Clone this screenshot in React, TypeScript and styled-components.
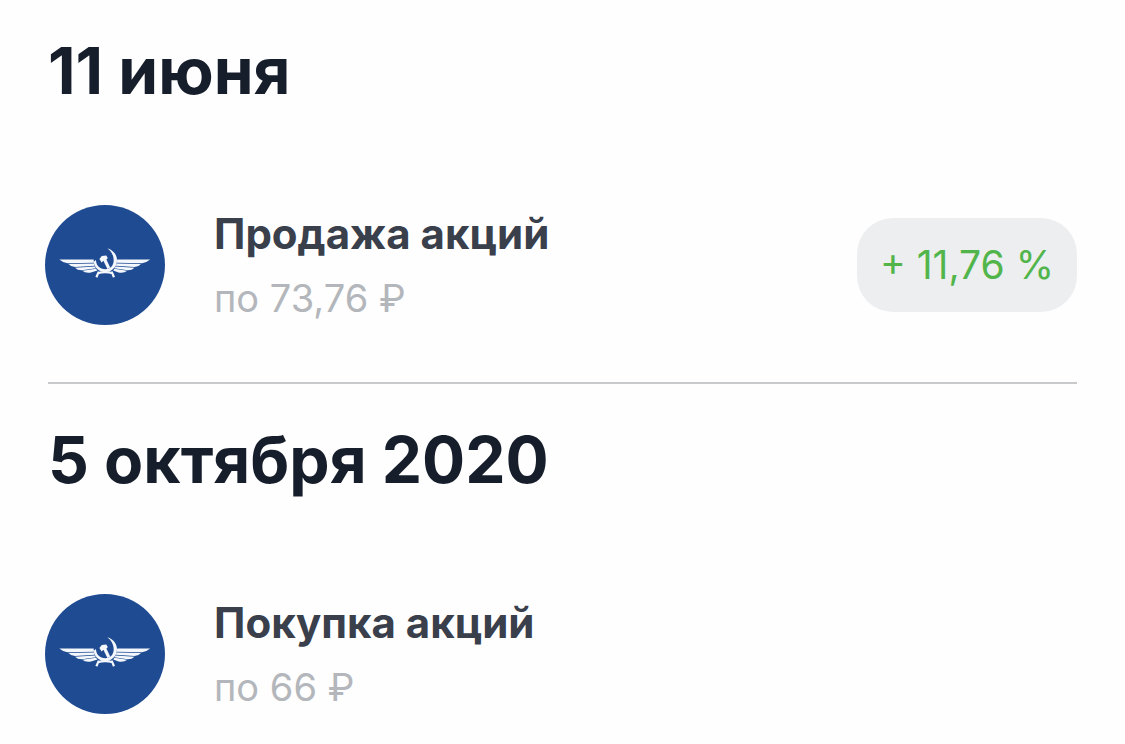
import styled, { createGlobalStyle } from 'styled-components';

interface Deal {
    date: string;
    title: string;
    price: string;
    profit?: string;
}

const deals: Deal[] = [
    { date: '11 июня', title: 'Продажа акций', price: 'по 73,76 ₽', profit: '+ 11,76 %' },
    { date: '5 октября 2020', title: 'Покупка акций', price: 'по 66 ₽' },
];

const GlobalStyle = createGlobalStyle`
    body {
        margin: 0;
        background: #fefefe;
        font-family: Inter, "Liberation Sans", sans-serif;
    }
`

const Page = styled.main`
    padding: 32px 48px 28px;
`

const Section = styled.section`
    & + & {
        border-top: 2px solid #c8c9cb;
        padding-top: 37px;
    }
`

const DateTitle = styled.h2`
    margin: 0 0 95px;
    color: #171e2b;
    font-size: 64px;
    font-weight: 700;
    line-height: 78px;
`

const Row = styled.div<{ $last: boolean }>`
    display: flex;
    align-items: center;
    margin-left: -3px;
    padding-bottom: ${props => props.$last ? '0' : '57px'};
`

const Logo = styled.svg`
    flex: none;
    width: 120px;
    height: 120px;
    margin-right: 49px;
`

const Info = styled.div`
    flex: 1;
    min-width: 0;
`

const Title = styled.h3`
    margin: 0 0 8px;
    color: #3a3f4c;
    font-size: 42px;
    font-weight: 700;
    line-height: 58px;
`

const Price = styled.p`
    margin: 0;
    color: #b3b6bb;
    font-size: 38px;
    line-height: 54px;
`

const Profit = styled.span`
    flex: none;
    padding: 0 23px;
    border-radius: 36px;
    background: #eceef0;
    color: #52b54b;
    font-size: 39px;
    line-height: 94px;
    white-space: nowrap;
`

function AirlineLogo() {
    return (
        <Logo viewBox="0 0 120 120" role="img" aria-label="Аэрофлот">
            <circle cx="60" cy="60" r="60" fill="#1f4b93" />
            <g fill="#f4f8fc">
                {/* left wing */}
                <path d="M14.3 54.6H48.6L49 57.8L22.5 58.2Q17.5 57.6 14.3 54.6Z" />
                <path d="M23.5 58.9L49 58.5L49.6 60.8L30 62Q26 61.8 23.5 58.9Z" />
                <path d="M30 62.7L49.8 61.4L50.8 63.2L37 65.2Q32.5 65.3 30 62.7Z" />
                <path d="M37.3 65.8L51 63.8L52.4 65.6L46 67.4Q40.5 68.3 37.3 65.8Z" />
                {/* right wing */}
                <path d="M105.2 54.6H72.2L71.8 57.8L97 58.2Q102 57.6 105.2 54.6Z" />
                <path d="M96 58.9L71.6 58.5L70.9 60.8L89.5 62Q93.5 61.8 96 58.9Z" />
                <path d="M89.5 62.7L70.6 61.4L69.6 63.2L82.5 65.2Q87 65.3 89.5 62.7Z" />
                <path d="M82.2 65.8L69.4 63.8L68.2 65.6L73.5 67.4Q79 68.3 82.2 65.8Z" />
                {/* sickle */}
                <path d="M62.3 43.2C68.6 45.2 72 49.9 72 55.2C72 61.8 66.9 67 60.1 67C53.9 67 49.2 62.6 48.8 56.7L50.9 55.1C51.3 60.9 55 64.3 60.2 64.3C65.3 64.3 68.7 60.5 68.7 55.3C68.7 50.7 66.6 46.4 62.3 43.2Z" />
                {/* hammer */}
                <path d="M54.4 53.9L56.8 50.9L61.3 50.5L62.8 53.2L61.4 54.6L65.2 62.6L62.4 64L58.4 55.8L56.6 57.6Z" />
            </g>
            <path
                d="M53.8 66.6L51.4 72.2M66.6 66.6L69 72.2M52.8 68.2Q60.2 66.2 67.6 68.2"
                fill="none"
                stroke="#f4f8fc"
                strokeWidth="2.2"
            />
        </Logo>
    );
}

function App() {
    return (
        <>
            <GlobalStyle />
            <Page>
                {deals.map((deal, index) => (
                    <Section key={deal.date}>
                        <DateTitle>{deal.date}</DateTitle>
                        <Row $last={index === deals.length - 1}>
                            <AirlineLogo />
                            <Info>
                                <Title>{deal.title}</Title>
                                <Price>{deal.price}</Price>
                            </Info>
                            {deal.profit ? <Profit>{deal.profit}</Profit> : ""}
                        </Row>
                    </Section>
                ))}
            </Page>
        </>
    );
}

export default App;
